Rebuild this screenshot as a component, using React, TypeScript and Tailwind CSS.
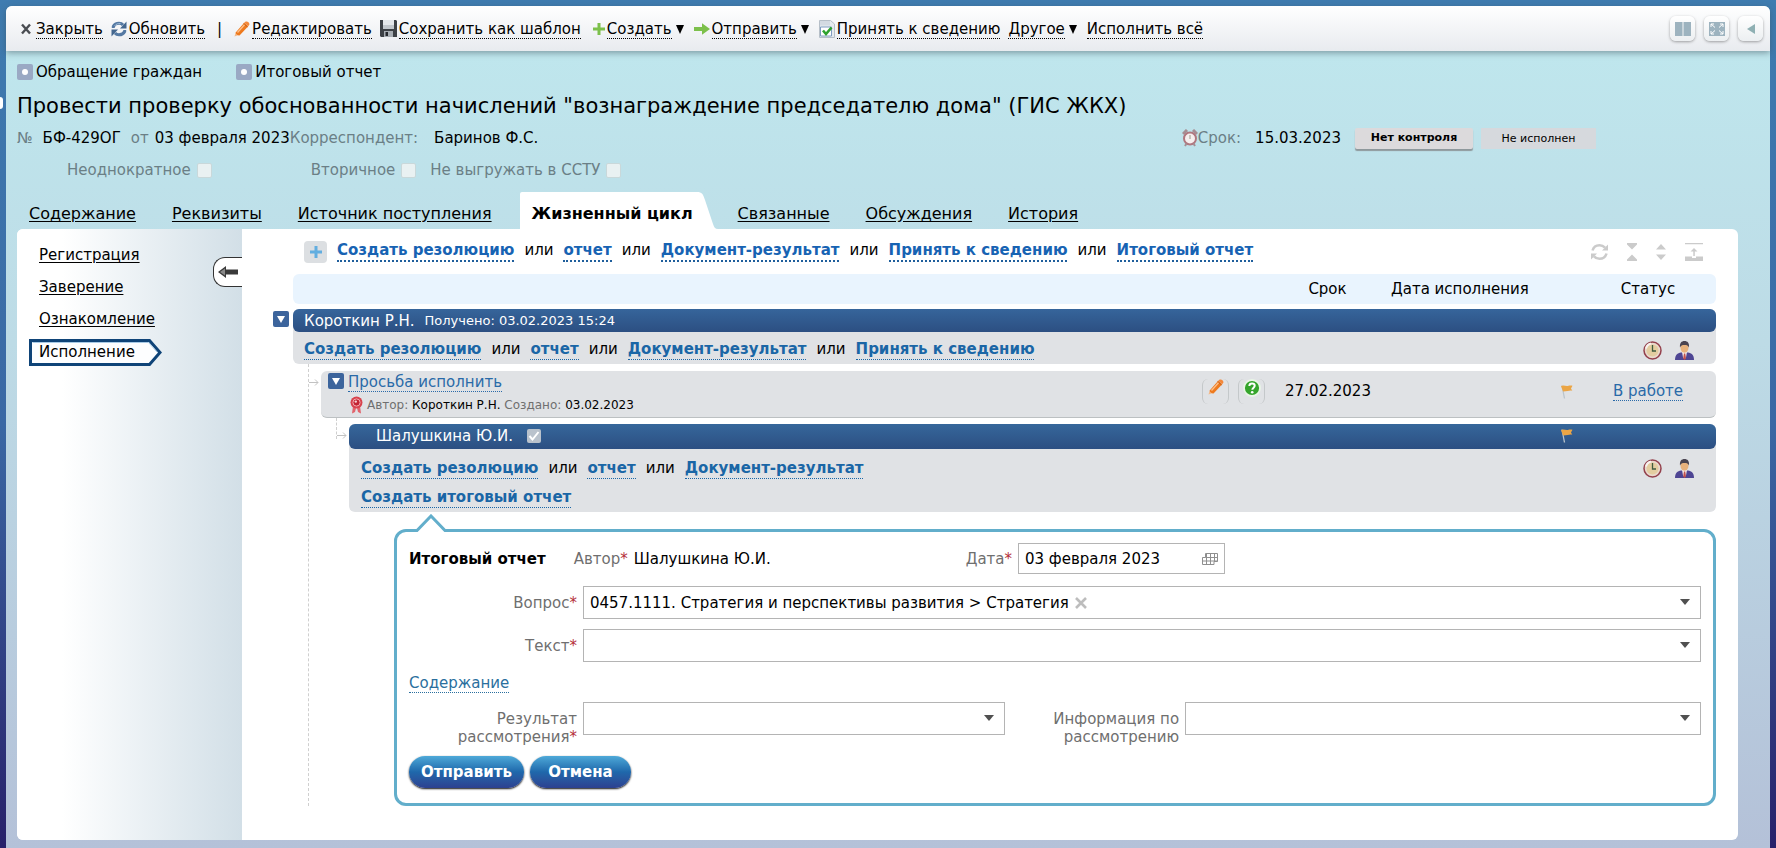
import { ReactNode, useState } from "react";

const tabs = [
  "Содержание",
  "Реквизиты",
  "Источник поступления",
  "Жизненный цикл",
  "Связанные",
  "Обсуждения",
  "История",
];

const sections = ["Регистрация", "Заверение", "Ознакомление", "Исполнение"];

/* ---------- Icons ---------- */

const CloseIcon = () => (
  <svg className="w-3 h-3" viewBox="0 0 12 12">
    <path d="M2 1.500l8 9M10 1.500l-8 9" stroke="#4a4d52" strokeWidth="2.4" />
  </svg>
);

const RefreshIcon = () => (
  <svg className="w-4 h-4" viewBox="0 0 16 16" fill="none" stroke="#5479a3" strokeWidth="3">
    <path d="M2.300 7V5.500C3.500 3 5.500 2.200 8 2.200c2 0 3 .5 4 1.800" />
    <path d="M13.700 9v1.500c-1.200 2.500-3.200 3.300-5.700 3.300-2 0-3-.5-4-1.800" />
    <path d="M15.500.5v7H9z" fill="#44678f" stroke="none" />
    <path d="M.5 15.500v-7H7z" fill="#44678f" stroke="none" />
    <path d="M3.500 5C5 3 7 2.300 9.500 2.500" stroke="#9db9d6" strokeWidth="1" />
  </svg>
);

const PencilIcon = () => (
  <svg className="w-4 h-4" viewBox="0 0 16 16">
    <path d="M.5 15.500l1.200-4.300 3 2.800z" fill="#f3b98a" />
    <path d="M1.700 11.500L10.200 1.800l4 3.400L5.500 14.500c-1.500.3-3.800-1.300-3.800-3z" fill="#ee7a1e" />
    <path d="M10.200 1.800L11.700.6c1.800-.8 4.300 1.200 3.600 3.200l-1.100 1.400z" fill="#f4883a" />
    <path d="M9.600 2.500l4 3.400" stroke="#c95c12" strokeWidth="1" />
    <path d="M3.500 11.500l7-7.800" stroke="#fdbf8a" strokeWidth="1.300" />
  </svg>
);

const SaveIcon = () => (
  <svg className="w-[17px] h-[17px]" viewBox="0 0 17 17">
    <path d="M0 0h16l1 1v16H1l-1-1z" fill="#3d4146" />
    <path d="M3 0h11v9H3z" fill="#e4e7ea" />
    <path d="M3 5h11v4H3z" fill="#c2c7cc" />
    <path d="M4 11h9v6H4z" fill="#a7adb3" />
    <path d="M5.500 12h2.500v4H5.500z" fill="#26292e" />
  </svg>
);

const PlusIcon = () => (
  <svg className="w-3 h-3" viewBox="0 0 12 12">
    <path d="M4.500 0h3v4.500H12v3H7.500V12h-3V7.500H0v-3h4.500z" fill="#7cc04b" />
  </svg>
);

const SendIcon = () => (
  <svg className="w-4 h-4" viewBox="0 0 16 16">
    <path d="M0 6h8V2.200L16 8l-8 5.800V10H0z" fill="#7cc04b" />
  </svg>
);

const AcceptIcon = () => (
  <svg className="w-4 h-[18px]" viewBox="0 0 16 18">
    <path d="M.5.5h11l4 3.500v13.500H.5z" fill="#e6ebef" stroke="#b6bfc8" />
    <path d="M1 1h10v4.500H1z" fill="#d3dae2" />
    <path d="M1.500 7h11v9h-11z" fill="#fff" stroke="#7f9cc0" />
    <path d="M4 10.500l3 3.500 5.500-6.500" fill="none" stroke="#2ea22e" strokeWidth="2.600" />
  </svg>
);

const AlarmIcon = () => (
  <svg className="w-4 h-[18px]" viewBox="0 0 16 18">
    <path d="M1 5l4-4M15 5l-4-4" stroke="#a58e93" strokeWidth="3" />
    <circle cx="8" cy="9.500" r="6" fill="#f6efef" stroke="#b0777f" strokeWidth="2" />
    <path d="M8 6v4" stroke="#998" strokeWidth="1" />
    <path d="M3 17l1.500-2.500M13 17l-1.500-2.500" stroke="#a58e93" strokeWidth="2" />
  </svg>
);

const ClockIcon = () => (
  <svg className="w-[19px] h-[19px]" viewBox="0 0 19 19">
    <circle cx="9.500" cy="9.500" r="8.500" fill="#ead9cc" stroke="#93404c" strokeWidth="1.500" />
    <circle cx="9.500" cy="9.500" r="6" fill="#e3cda0" />
    <path d="M3 7.500C3.500 5 5.500 3 8 2.500" fill="none" stroke="#f8f2ee" strokeWidth="2" />
    <path d="M9.500 4v6H13" fill="none" stroke="#3f5b3f" strokeWidth="1.300" />
  </svg>
);

const PersonIcon = () => (
  <svg className="w-[19px] h-[19px]" viewBox="0 0 19 19">
    <path d="M0 19c0-5 2.500-7 6-7.500h7c3.500.5 6 2.500 6 7.500z" fill="#4e4593" />
    <path d="M7 11h5l-1 5.500-1.500 1.500L8 16.500z" fill="#f3e6e2" />
    <path d="M9 12.500h1.200l.8 5L9.500 19 8.200 17.500z" fill="#c0504d" />
    <ellipse cx="9.500" cy="6.800" rx="4" ry="5" fill="#e8b27c" />
    <path d="M5 6.500C4.500 2 6.500 0 9.500 0s5 2 4.500 6.500C13 4.500 12 4 9.500 4S6 4.500 5 6.500z" fill="#4a4450" />
  </svg>
);

const FlagIcon = () => (
  <svg className="w-[14px] h-[15px]" viewBox="0 0 14 15">
    <path d="M2 1.500l2.500 13" stroke="#b9c4cc" strokeWidth="1.300" />
    <path d="M1 2c3-1.500 4.500.5 7.500-.3 1.500-.4 2.500-.3 4 .1L11 4.500l1.300 2.300C9.500 6 8 7.500 3 7.500z" fill="#eba545" />
  </svg>
);

const HelpIcon = () => (
  <svg className="w-[18px] h-[18px]" viewBox="0 0 18 18">
    <circle cx="9" cy="9" r="8" fill="#35a52c" stroke="#e9f6e6" strokeWidth="1.800" />
    <path
      d="M6.300 7C6.400 5.200 7.500 4.500 9 4.500c1.600 0 2.700.9 2.700 2.300 0 1.700-2.400 2-2.400 3.900"
      fill="none"
      stroke="#fff"
      strokeWidth="2"
    />
    <circle cx="9.200" cy="13.200" r="1.300" fill="#fff" />
  </svg>
);

const SealIcon = () => (
  <svg className="w-[13px] h-[18px]" viewBox="0 0 13 18">
    <path d="M3 10l-1 7.500 3-1.500 1-4zM10 10l1 7.500L8 16l-1-4z" fill="#e2636b" />
    <circle cx="6.500" cy="6.500" r="6" fill="#d8434e" />
    <circle cx="6.500" cy="6.500" r="3.600" fill="#c22432" stroke="#f3aab0" />
    <circle cx="5.800" cy="5.600" r="1.200" fill="#f7d3d5" />
  </svg>
);

const CalendarIcon = () => (
  <svg className="w-4 h-3" viewBox="0 0 16 12" fill="none" stroke="#8f8f8f">
    <path d="M3.500.5h12v8H12v3H.5V4.500h3z" />
    <path d="M.5 8h15M3.500 4.500h12M4.500.5v11M8.500.5v11M12.500.5v8" />
  </svg>
);

const TreeArrow = () => (
  <svg className="w-[10px] h-[7px] shrink-0" viewBox="0 0 10 7" fill="none" stroke="#c2c2c2">
    <path d="M0 3.500h9M6 .5l3 3-3 3" />
  </svg>
);

const CaretDown = () => (
  <svg className="w-[10px] h-[6px]" viewBox="0 0 10 6">
    <path d="M0 0h10L5 6z" fill="#505050" />
  </svg>
);

/* ---------- Small parts ---------- */

type ToolProps = { icon?: ReactNode; menu?: boolean; children: ReactNode };

const Tool = ({ icon, menu, children }: ToolProps) => (
  <button className="flex items-center gap-0.5 whitespace-nowrap">
    {icon}
    <span className="pt-0.5 border-b border-dotted border-black leading-[18px]">{children}</span>
    {menu && (
      <svg className="mx-0.5 w-2 h-2.5" viewBox="0 0 8 10">
        <path d="M0 1h8L4 10z" />
      </svg>
    )}
  </button>
);

const WindowButton = ({ label, children }: { label: string; children: ReactNode }) => (
  <button
    aria-label={label}
    className="w-[25px] h-[25px] flex items-center justify-center rounded-md bg-linear-to-b from-white to-[#eceff1] shadow-[0_1px_3px_rgba(0,0,0,0.35)]"
  >
    {children}
  </button>
);

const LinkRow = ({ items, thick }: { items: string[]; thick?: boolean }) => (
  <div className="flex flex-wrap gap-x-2.5 leading-[19px]">
    {items.map((item, i) => (
      <span key={item} className="flex gap-x-2.5">
        {i > 0 && <span>или</span>}
        <a
          href="#"
          className={
            thick
              ? "font-bold text-[#1763b3] border-b-2 border-dotted border-[#1f5f9c]"
              : "font-bold text-[#1a66a6] border-b border-dotted border-[#1a66a6]"
          }
        >
          {item}
        </a>
      </span>
    ))}
  </div>
);

const Toggle = () => (
  <button
    aria-label="Свернуть"
    className="w-4 h-4 shrink-0 flex items-center justify-center rounded-xs bg-[#3c649c]"
  >
    <svg className="w-2 h-2" viewBox="0 0 8 8">
      <path d="M0 1h8L4 8z" fill="#fff" />
    </svg>
  </button>
);

const RowIcons = () => (
  <div className="flex gap-[13px] pr-[22px]">
    <button aria-label="Сроки">
      <ClockIcon />
    </button>
    <button aria-label="Исполнитель">
      <PersonIcon />
    </button>
  </div>
);

const Required = () => <span className="text-[#b5303a]">*</span>;

const SelectBox = ({ id, children }: { id: string; children?: ReactNode }) => (
  <div className="flex-1 h-[33px] flex items-center border border-[#b4b4b4] bg-white px-1.5 relative">
    {children}
    <select id={id} className="flex-1 h-full appearance-none outline-none bg-transparent" />
    <span className="absolute right-2.5 top-3 pointer-events-none">
      <CaretDown />
    </span>
  </div>
);

const HeaderCheck = ({ label }: { label: string }) => (
  <label className="flex items-center gap-1.5 text-[#6b7f86]">
    {label}
    <input
      type="checkbox"
      className="appearance-none w-[15px] h-[15px] rounded-xs bg-[#e9f1f2] border border-[#c9d8da]"
    />
  </label>
);

/* ---------- Page blocks ---------- */

const Toolbar = () => (
  <div className="flex items-center justify-between h-[45px] pl-[14px] pr-[7px] rounded-t-md bg-linear-to-b from-white to-[#e8ebef] shadow-[0_2px_6px_rgba(60,80,90,0.5)] relative">
    <div className="flex items-center gap-2">
      <Tool icon={<span className="mr-0.5"><CloseIcon /></span>}>Закрыть</Tool>
      <Tool icon={<RefreshIcon />}>Обновить</Tool>
      <span className="px-1">|</span>
      <Tool icon={<PencilIcon />}>Редактировать</Tool>
      <Tool icon={<SaveIcon />}>Сохранить как шаблон</Tool>
      <span className="ml-1">
        <Tool icon={<PlusIcon />} menu>
          Создать
        </Tool>
      </span>
      <Tool icon={<SendIcon />} menu>
        Отправить
      </Tool>
      <Tool icon={<AcceptIcon />}>Принять к сведению</Tool>
      <Tool menu>Другое</Tool>
      <Tool>Исполнить всё</Tool>
    </div>
    <div className="flex gap-[9px]">
      <WindowButton label="Две панели">
        <svg className="w-4 h-[14px]" viewBox="0 0 16 14" fill="#9db3bf">
          <path d="M0 0h7.500v14H0zM8.500 0H16v14H8.500z" />
        </svg>
      </WindowButton>
      <WindowButton label="Во весь экран">
        <svg className="w-4 h-[14px]" viewBox="0 0 16 14">
          <path d="M0 0h16v14H0z" fill="#9db3bf" />
          <path
            d="M2 5V2h3M11 2h3v3M14 9v3h-3M5 12H2V9M2 2l4 3.500M14 2l-4 3.500M14 12l-4-3.500M2 12l4-3.500"
            stroke="#fff"
            fill="none"
          />
        </svg>
      </WindowButton>
      <WindowButton label="Назад">
        <svg className="w-2 h-[10px]" viewBox="0 0 8 10">
          <path d="M8 0v10L0 5z" fill="#8fb0b3" />
        </svg>
      </WindowButton>
    </div>
  </div>
);

const Marker = () => (
  <span className="w-4 h-4 flex items-center justify-center rounded-xs bg-[#9aa9c4]">
    <span className="w-1.5 h-1.5 rounded-full bg-white" />
  </span>
);

const DocumentHeader = () => (
  <div className="pl-[11px] pt-3">
    <div className="flex gap-[34px] h-[18px] items-center">
      <span className="flex items-center gap-[3px]">
        <Marker />
        Обращение граждан
      </span>
      <span className="flex items-center gap-[3px]">
        <Marker />
        Итоговый отчет
      </span>
    </div>
    <h1 className="mt-[11px] text-[21px] leading-[28px]">
      Провести проверку обоснованности начислений "вознаграждение председателю дома" (ГИС ЖКХ)
    </h1>
    <div className="mt-[7px] flex items-center h-[22px] pr-[174px]">
      <span className="text-[#6b7f86]">№</span>
      <span className="ml-2.5">БФ-429ОГ</span>
      <span className="ml-2.5 text-[#6b7f86]">от</span>
      <span className="ml-1.5">03 февраля 2023</span>
      <span className="text-[#6b7f86]">Корреспондент:</span>
      <span className="ml-4">Баринов Ф.С.</span>
      <span className="ml-auto flex items-center text-[#6b7f86]">
        <AlarmIcon />
        Срок:
      </span>
      <span className="ml-[14px]">15.03.2023</span>
      <button className="ml-[14px] w-[118px] h-[21px] text-[11px] font-bold rounded-xs bg-[#dcdadc] shadow-[0_2px_1px_#8e989c]">
        Нет контроля
      </button>
      <span className="ml-2 w-[115px] h-[21px] pt-0.5 flex items-center justify-center text-[11px] bg-[#d6d9dd]">
        Не исполнен
      </span>
    </div>
    <div className="mt-2.5 ml-[50px] flex items-center h-[22px]">
      <HeaderCheck label="Неоднократное" />
      <span className="w-[99px]" />
      <HeaderCheck label="Вторичное" />
      <span className="w-[14px]" />
      <HeaderCheck label="Не выгружать в ССТУ" />
    </div>
  </div>
);

const Tabs = () => (
  <nav className="mt-[11px] ml-[5px] flex h-[37px] text-base">
    {tabs.map((tab) =>
      tab === "Жизненный цикл" ? (
        <div key={tab} className="flex ml-2.5 mr-0.5">
          <a href="#" className="px-3 pr-1 pt-2.5 leading-6 font-bold bg-white rounded-tl-xs">
            {tab}
          </a>
          <svg className="w-[21px] h-[37px]" viewBox="0 0 21 37">
            <path d="M0 0c5 0 6 2 8 8l8 24c1 3 2 5 5 5H0z" fill="#fff" />
          </svg>
        </div>
      ) : (
        <a key={tab} href="#" className="px-[18px] pt-2.5 leading-6 underline underline-offset-2">
          {tab}
        </a>
      )
    )}
  </nav>
);

const Sidebar = () => (
  <aside className="w-[225px] shrink-0 rounded-l-md bg-linear-to-r from-white from-20% to-[#d2dfe7] flex justify-between">
    <nav className="pt-[14px] pl-3">
      {sections.map((section) =>
        section === "Исполнение" ? (
          <a key={section} href="#" className="relative block h-[27px] pl-2.5 w-[133px] leading-[27px]">
            <svg className="absolute inset-0 w-full h-full" viewBox="0 0 133 27">
              <path d="M1.500 1.500h119L131 13.500 120.500 25.500H1.500z" fill="#fdfeff" stroke="#0f4478" strokeWidth="3" />
              <path d="M3.500 3.500h116L128.500 13.500" fill="none" stroke="#a9cbe6" />
            </svg>
            <span className="relative">{section}</span>
          </a>
        ) : (
          <a key={section} href="#" className="block pl-2.5 h-8 leading-6 underline underline-offset-2">
            {section}
          </a>
        )
      )}
    </nav>
    <button
      aria-label="Скрыть меню"
      className="mt-7 w-[29px] h-[30px] flex items-center justify-center rounded-l-xl border border-r-0 border-[#333] bg-white"
    >
      <svg className="w-5 h-3" viewBox="0 0 20 12">
        <path d="M0 6l8-6v3.500h12v5H8V12z" fill="#3a3a3a" />
        <path d="M2 6l5-3.500v7z" fill="#8a8a8a" />
      </svg>
    </button>
  </aside>
);

const ContentActions = () => (
  <div className="flex items-center h-[45px] pl-[62px]">
    <button
      aria-label="Добавить"
      className="w-[23px] h-[22px] mr-2.5 flex items-center justify-center rounded-sm bg-[#dcdfe2]"
    >
      <svg className="w-3 h-3" viewBox="0 0 12 12">
        <path d="M4.500 0h3v4.500H12v3H7.500V12h-3V7.500H0v-3h4.500z" fill="#62aee0" />
      </svg>
    </button>
    <LinkRow
      thick
      items={["Создать резолюцию", "отчет", "Документ-результат", "Принять к сведению", "Итоговый отчет"]}
    />
    <div className="ml-auto pr-[35px] flex items-center gap-[18px]">
      <button aria-label="Обновить">
        <svg className="w-[19px] h-[18px]" viewBox="0 0 18 18" fill="none" stroke="#cbcbcb" strokeWidth="2.500">
          <path d="M2 7.500C3 4 5.500 2.200 9 2.200c2.500 0 4 .8 5.500 2.500M16 10.500c-1 3.500-3.500 5.300-7 5.300-2.500 0-4-.8-5.500-2.500" />
          <path d="M17.500 1.500v6h-6zM.5 16.500v-6h6z" fill="#cbcbcb" stroke="none" />
        </svg>
      </button>
      <button aria-label="Свернуть всё">
        <svg className="w-[10px] h-[18px]" viewBox="0 0 10 18" fill="#cbcbcb">
          <path d="M0 0h10v1.500L5 6.500 0 1.500zM0 18h10v-1.500l-5-5-5 5z" />
        </svg>
      </button>
      <button aria-label="Развернуть всё">
        <svg className="w-[12px] h-[18px]" viewBox="0 0 12 18" fill="#cbcbcb">
          <path d="M1 6.500L6 1l5 5.500zM1 11.500h10L6 17z" />
        </svg>
      </button>
      <button aria-label="Наверх">
        <svg className="w-[18px] h-[18px]" viewBox="0 0 18 18" fill="#cbcbcb">
          <path d="M0 0h18v1.200H0zM0 13.500h7v1.500h4v-1.500h7V18H0zM8.300 13V8.500H5.500L9 5l3.500 3.500H9.800V13z" />
        </svg>
      </button>
    </div>
  </div>
);

const ReportForm = () => (
  <form
    className="relative mt-[17px] ml-[45px] border-[3px] border-[#62aecb] rounded-xl bg-white pt-[11px] pr-3 pb-[15px] pl-3"
    onSubmit={(e) => e.preventDefault()}
  >
    <svg className="absolute left-[18px] -top-[18px] w-8 h-[18px]" viewBox="0 0 32 18">
      <path d="M1 18L16 2l15 16z" fill="#fff" />
      <path d="M0 16.500h2L16 2l14 14.500h2" fill="none" stroke="#62aecb" strokeWidth="3" />
    </svg>

    <div className="flex items-center">
      <h2 className="font-bold">Итоговый отчет</h2>
      <span className="ml-7 text-[#6f6f6f]">
        Автор
        <Required />
      </span>
      <span className="ml-1.5">Шалушкина Ю.И.</span>
      <label htmlFor="date" className="ml-auto text-[#6f6f6f]">
        Дата
        <Required />
      </label>
      <div className="ml-1.5 mr-[476px] w-[207px] h-[31px] flex items-center border border-[#b4b4b4] px-1.5">
        <input id="date" className="flex-1 min-w-0 outline-none" defaultValue="03 февраля 2023" />
        <button type="button" aria-label="Календарь">
          <CalendarIcon />
        </button>
      </div>
    </div>

    <div className="mt-3 flex items-center gap-1.5">
      <label htmlFor="question" className="w-[168px] text-right text-[#6f6f6f]">
        Вопрос
        <Required />
      </label>
      <SelectBox id="question">
        <span>0457.1111. Стратегия и перспективы развития &gt; Стратегия</span>
        <button type="button" aria-label="Удалить" className="ml-1.5">
          <svg className="w-3 h-3" viewBox="0 0 12 12">
            <path d="M1 1l10 10M11 1L1 11" stroke="#bdbdbd" strokeWidth="2.600" />
          </svg>
        </button>
      </SelectBox>
    </div>

    <div className="mt-2.5 flex items-center gap-1.5">
      <label htmlFor="text" className="w-[168px] text-right text-[#6f6f6f]">
        Текст
        <Required />
      </label>
      <SelectBox id="text" />
    </div>

    <div className="mt-3 leading-[18px]">
      <a href="#" className="inline-block text-[#2a6f9e] border-b border-dotted border-[#2a6f9e]">
        Содержание
      </a>
    </div>

    <div className="mt-[9px] flex gap-1.5 leading-[18px]">
      <label htmlFor="result" className="w-[168px] pt-2 text-right text-[#6f6f6f]">
        <span className="block">Результат</span>
        рассмотрения
        <Required />
      </label>
      <div className="flex-9 flex">
        <SelectBox id="result" />
      </div>
      <label htmlFor="info" className="w-[168px] pt-2 text-right text-[#6f6f6f]">
        <span className="block">Информация по</span>
        рассмотрению
      </label>
      <div className="flex-11 flex">
        <SelectBox id="info" />
      </div>
    </div>

    <div className="mt-2.5 flex gap-1.5">
      <button className="h-8 w-[115px] rounded-2xl font-bold text-white bg-linear-to-b from-[#4ea9d8] via-[#1f68ab] to-[#2c4190] shadow-[0_1px_2px_#111]">
        Отправить
      </button>
      <button
        type="button"
        className="h-8 w-[101px] rounded-2xl font-bold text-white bg-linear-to-b from-[#4ea9d8] via-[#1f68ab] to-[#2c4190] shadow-[0_1px_2px_#111]"
      >
        Отмена
      </button>
    </div>
  </form>
);

const Lifecycle = () => {
  const [done, setDone] = useState(true);

  return (
    <div className="pl-[31px] pr-[22px]">
      {/* Column titles */}
      <div className="ml-5 h-[30px] flex items-center justify-end rounded-md bg-[#e9f4fe] text-center">
        <span className="w-[127px]">Срок</span>
        <span className="w-[136px] whitespace-nowrap">Дата исполнения</span>
        <span className="w-[53px]" />
        <span className="w-[136px]">Статус</span>
      </div>

      {/* Root resolution */}
      <div className="mt-[5px] flex">
        <div className="w-5 pt-0.5">
          <Toggle />
        </div>
        <div className="flex-1 rounded-md bg-[#e0e2e5]">
          <div className="h-[23px] flex items-center pl-[11px] rounded-md bg-linear-to-b from-[#36659b] to-[#2c4f82] text-white">
            Короткин Р.Н.
            <span className="ml-2.5 text-[13px]">Получено: 03.02.2023 15:24</span>
          </div>
          <div className="h-8 pt-1 flex items-center justify-between pl-[11px]">
            <LinkRow items={["Создать резолюцию", "отчет", "Документ-результат", "Принять к сведению"]} />
            <RowIcons />
          </div>
        </div>
      </div>

      {/* Children of the root */}
      <div className="ml-[35px] border-l border-dashed border-[#cfcfcf] pt-[7px]">
        <div className="flex">
          <div className="w-3 pt-2">
            <TreeArrow />
          </div>
          <div className="flex-1 h-[47px] flex justify-between rounded-md bg-[#e0e2e5] border-b border-[#bcc0c2]">
            <div className="pl-[7px] pt-0.5">
              <div className="flex items-start gap-1">
                <Toggle />
                <a href="#" className="leading-[18px] text-[#2a6aa8] border-b border-dotted border-[#2a6aa8]">
                  Просьба исполнить
                </a>
              </div>
              <div className="flex items-center pl-[22px] mt-1 text-xs whitespace-pre">
                <SealIcon />
                <span className="ml-1 text-[#6f6f6f]">Автор: </span>
                <span>Короткин Р.Н. </span>
                <span className="text-[#6f6f6f]">Создано: </span>
                <span>03.02.2023</span>
              </div>
            </div>
            <div className="flex items-center h-10 text-center">
              <button
                aria-label="Редактировать"
                className="w-[27px] h-[25px] flex items-start justify-center rounded-md border-x border-[#c4c8ca]"
              >
                <PencilIcon />
              </button>
              <button
                aria-label="Справка"
                className="ml-[9px] w-[27px] h-[25px] flex items-start justify-center rounded-md border-x border-[#c4c8ca]"
              >
                <HelpIcon />
              </button>
              <span className="w-[126px]">27.02.2023</span>
              <span className="w-[136px]" />
              <span className="w-[53px] flex justify-end pr-1.5">
                <FlagIcon />
              </span>
              <span className="w-[136px]">
                <a href="#" className="inline-block leading-[18px] text-[#2a6aa8] border-b border-dotted border-[#2a6aa8]">
                  В работе
                </a>
              </span>
            </div>
          </div>
        </div>

        {/* Executor of the request */}
        <div className="ml-[27px] flex">
          <div className="w-[13px] h-[21px] flex items-end border-l border-dashed border-[#cfcfcf]">
            <TreeArrow />
          </div>
          <div className="flex-1 mt-1.5 rounded-md bg-[#e0e2e5]">
            <div className="h-[25px] flex items-center pl-[27px] pb-0.5 rounded-md bg-linear-to-b from-[#36679b] to-[#2c4f82] text-white">
              <label htmlFor="done">Шалушкина Ю.И.</label>
              <input
                id="done"
                type="checkbox"
                checked={done}
                onChange={() => setDone(!done)}
                className="peer appearance-none ml-[14px] w-[14px] h-[14px] rounded-xs bg-[#b9c2cc]"
              />
              <svg
                className="hidden peer-checked:block -ml-[13px] w-3 h-3 pointer-events-none"
                viewBox="0 0 12 12"
                fill="none"
              >
                <path d="M1.500 6l3 3.500L10.500 2" stroke="#fff" strokeWidth="2" />
              </svg>
              <span className="ml-auto pr-[142px]">
                <FlagIcon />
              </span>
            </div>
            <div className="h-[63px] pt-2.5 pl-3 flex justify-between items-start">
              <div className="flex flex-col gap-[9px]">
                <LinkRow items={["Создать резолюцию", "отчет", "Документ-результат"]} />
                <LinkRow items={["Создать итоговый отчет"]} />
              </div>
              <RowIcons />
            </div>
          </div>
        </div>

        <div className="ml-10">
          <ReportForm />
        </div>
      </div>
    </div>
  );
};

export default function App() {
  return (
    <div className="relative min-h-screen flex flex-col pt-1.5 px-1.5 bg-linear-to-b from-[#3f7cb0] via-[#3a68a4] to-[#28206a] font-['DejaVu_Sans',Verdana,sans-serif] text-[15px] leading-5 text-black">
      {/* Handle of the collapsed left panel */}
      <button aria-label="Показать панель" className="absolute left-0 top-[97px] w-[3px] h-3 rounded-r-full bg-white" />
      <div className="flex-1 flex flex-col rounded-t-md bg-linear-to-b from-[#bfe8ee] via-[#bddbe6] via-40% to-[#b4c1d8] pb-2">
        <Toolbar />
        <DocumentHeader />
        <Tabs />
        <div className="flex-1 flex ml-[11px] mr-8 rounded-md bg-white">
          <Sidebar />
          <main className="flex-1 min-w-0">
            <ContentActions />
            <Lifecycle />
          </main>
        </div>
      </div>
    </div>
  );
}
